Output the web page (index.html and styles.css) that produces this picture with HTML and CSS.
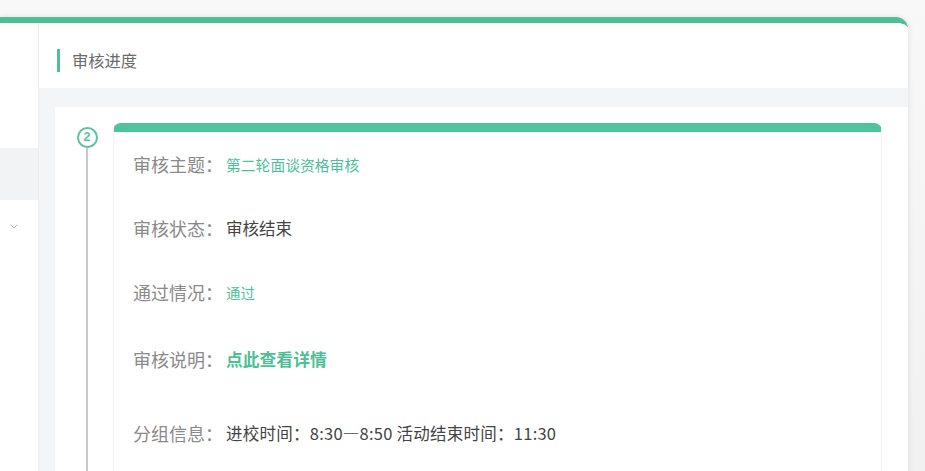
FILE: index.html
```html
<!DOCTYPE html>
<html lang="zh-CN">
<head>
<meta charset="utf-8">
<title>审核进度</title>
<link rel="stylesheet" href="styles.css">
</head>
<body>
<div class="frame">
  <aside class="sidebar">
    <div class="side-blank"></div>
    <div class="side-active"></div>
    <div class="side-item">
      <svg class="chev" width="8" height="5" viewBox="0 0 8 5"><path d="M0.5 0.5 L4 4 L7.5 0.5" fill="none" stroke="#b8b8b8" stroke-width="1"/></svg>
    </div>
  </aside>
  <main class="main">
    <div class="header">
      <span class="title-bar"></span>
      <span class="title">审核进度</span>
    </div>
    <div class="content">
      <div class="panel">
        <div class="step">
          <div class="step-axis">
            <div class="step-num">2</div>
            <div class="step-line"></div>
          </div>
          <div class="card">
            <div class="row r1"><span class="label">审核主题：</span><span class="val green sm">第二轮面谈资格审核</span></div>
            <div class="row r2"><span class="label">审核状态：</span><span class="val dark">审核结束</span></div>
            <div class="row r3"><span class="label">通过情况：</span><span class="val green xs">通过</span></div>
            <div class="row r4"><span class="label">审核说明：</span><span class="val green bold">点此查看详情</span></div>
            <div class="row r5"><span class="label">分组信息：</span><span class="val dark wide">进校时间：8:30—8:50 活动结束时间：11:30</span></div>
          </div>
        </div>
      </div>
    </div>
  </main>
</div>
</body>
</html>
```
FILE: styles.css
```css
* { box-sizing: border-box; }
html, body { margin: 0; padding: 0; }
body {
  width: 925px;
  height: 471px;
  overflow: hidden;
  background: linear-gradient(#f8f8f8, #f1f1f1);
  font-family: "Noto Sans CJK SC", "Noto Sans", sans-serif;
  padding-top: 17px;
}
.frame {
  width: 908px;
  height: 460px;
  display: flex;
  border-top: 6px solid #4fbf98;
  border-top-right-radius: 12px;
  background: #fff;
  box-shadow: 0 0 6px rgba(0,0,0,0.10);
  overflow: hidden;
}
.sidebar {
  width: 39px;
  flex: none;
  border-right: 1px solid #ececec;
  display: flex;
  flex-direction: column;
  background: #fff;
}
.side-blank { height: 125px; }
.side-active { height: 52px; background: #f2f3f5; }
.side-item { height: 52px; padding: 24px 0 0 10px; }
.chev { display: block; }
.main {
  flex: 1;
  display: flex;
  flex-direction: column;
  background: #f4f5f7;
}
.header {
  height: 65px;
  background: #fff;
  display: flex;
  align-items: center;
  padding-left: 18px;
  padding-top: 10px;
}
.title-bar {
  width: 3px;
  height: 23px;
  background: #4fbf98;
}
.title {
  margin-left: 12px;
  font-size: 16.3px;
  color: #6a6a6a;
  line-height: 23px;
}
.content {
  flex: 1;
  padding: 19px 0 0 16px;
}
.panel {
  height: 100%;
  background: #fff;
  padding: 16px 26px 0 22px;
}
.step { display: flex; height: 100%; }
.step-axis {
  width: 20px;
  flex: none;
  display: flex;
  flex-direction: column;
  align-items: center;
  padding-top: 4px;
}
.step-num {
  width: 21px;
  height: 21px;
  border: 2px solid #5cc3a2;
  border-radius: 50%;
  color: #5cc3a2;
  font-family: "Liberation Sans", sans-serif;
  font-weight: 700;
  font-size: 12.5px;
  line-height: 17px;
  text-align: center;
  flex: none;
}
.step-line {
  flex: 1;
  width: 1.5px;
  background: #c9c9c9;
}
.card {
  flex: 1;
  margin-left: 16px;
  border-top: 9px solid #4fc39c;
  border-radius: 8px 8px 0 0;
  border-left: 1px solid #f3f3f3;
  border-right: 1px solid #f3f3f3;
  padding: 20px 0 0 19px;
}
.row {
  display: flex;
  align-items: center;
  height: 24px;
  white-space: nowrap;
}
.r2, .r3 { margin-top: 40px; }
.r4 { margin-top: 43px; }
.r5 { margin-top: 50px; }
.label {
  font-size: 18px;
  color: #8a8a8a;
  width: 93px;
  flex: none;
}
.val { font-size: 16.5px; }
.green { color: #4dbf97; }
.dark { color: #444; }
.wide { letter-spacing: 0.25px; }
.sm { font-size: 14.8px; }
.xs { font-size: 14.5px; }
.bold { font-weight: 700; font-size: 16.8px; }
```
